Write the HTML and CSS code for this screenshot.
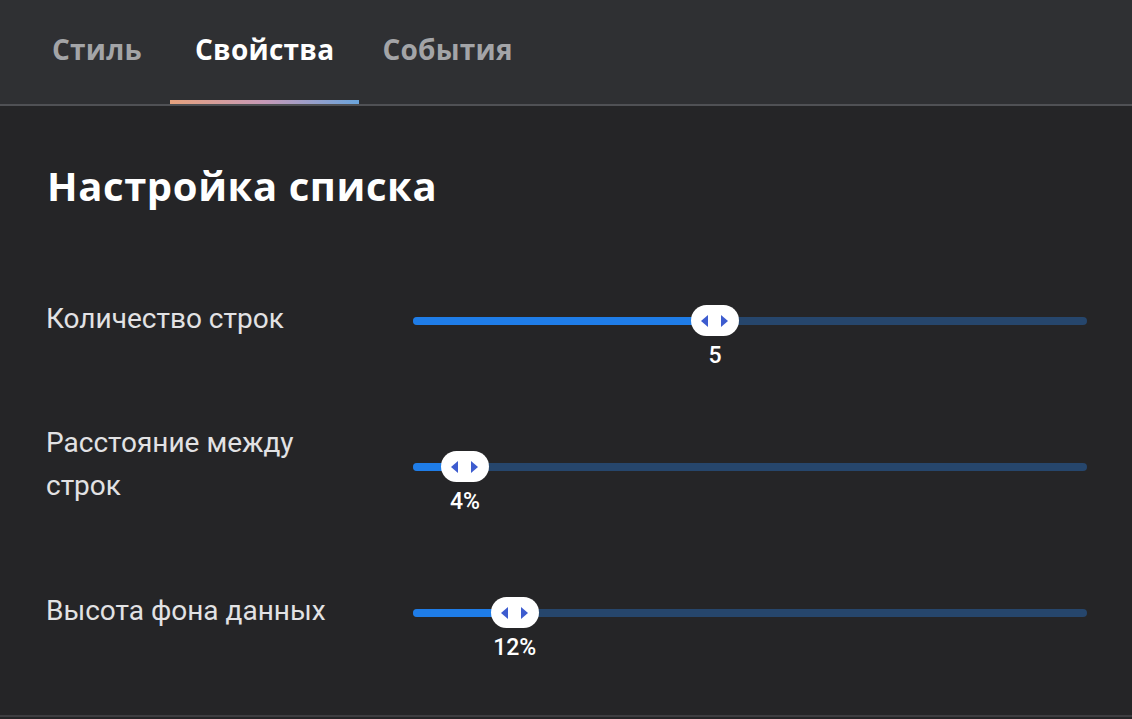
FILE: index.html
```html
<!DOCTYPE html>
<html lang="ru">
<head>
<meta charset="utf-8">
<title>Свойства</title>
<link rel="stylesheet" href="styles.css">
</head>
<body>
<div class="panel">
  <nav class="tabs">
    <div class="tab">Стиль</div>
    <div class="tab active">Свойства</div>
    <div class="tab">События</div>
  </nav>
  <section class="content">
    <h1 class="title">Настройка списка</h1>
    <div class="row">
      <div class="label">Количество строк</div>
      <div class="slider">
        <div class="track">
          <div class="fill" style="width:44.8%"></div>
          <div class="thumb" style="left:44.8%">
            <span class="arrow left"></span><span class="arrow right"></span>
          </div>
          <div class="value" style="left:44.8%">5</div>
        </div>
      </div>
    </div>
    <div class="row">
      <div class="label">Расстояние между строк</div>
      <div class="slider">
        <div class="track">
          <div class="fill" style="width:7.7%"></div>
          <div class="thumb" style="left:7.7%">
            <span class="arrow left"></span><span class="arrow right"></span>
          </div>
          <div class="value" style="left:7.7%">4%</div>
        </div>
      </div>
    </div>
    <div class="row">
      <div class="label">Высота фона данных</div>
      <div class="slider">
        <div class="track">
          <div class="fill" style="width:15.1%"></div>
          <div class="thumb" style="left:15.1%">
            <span class="arrow left"></span><span class="arrow right"></span>
          </div>
          <div class="value" style="left:15.1%">12%</div>
        </div>
      </div>
    </div>
  </section>
</div>
</body>
</html>
```

FILE: styles.css
```css
* { box-sizing: border-box; }
html, body { margin: 0; padding: 0; background: #252527; }
body { width: 1132px; height: 719px; overflow: hidden; }

.panel {
  height: 717px;
  background: #252527;
  border-bottom: 2px solid #3d3d40;
  display: flex;
  flex-direction: column;
}

.tabs {
  height: 106px;
  background: #2f3033;
  border-bottom: 2px solid #505155;
  display: flex;
  align-items: stretch;
  gap: 3px;
  padding-left: 27px;
}

.tab {
  position: relative;
  padding: 34px 25px 0;
  font-family: "Open Sans", "DejaVu Sans", sans-serif;
  font-weight: 700;
  font-size: 28px;
  line-height: 30px;
  letter-spacing: 0.25px;
  color: #a3a4a7;
}

.tab.active {
  color: #ffffff;
  margin-right: -5px;
}

.tab.active::after {
  content: "";
  position: absolute;
  left: 0;
  right: 0;
  bottom: 0;
  height: 4px;
  background: linear-gradient(90deg, #e6a27e 0%, #c79ab8 50%, #6aa4dc 100%);
}

.content {
  flex: 1;
  padding: 0 45px 0 46px;
  display: flex;
  flex-direction: column;
}

.title {
  margin: 55px 0 0 1px;
  font-family: "Open Sans", "DejaVu Sans", sans-serif;
  font-weight: 700;
  font-size: 40px;
  line-height: 50px;
  letter-spacing: 0.6px;
  color: #ffffff;
  height: 87px;
}

.row {
  height: 146px;
  display: flex;
  align-items: center;
}

.label {
  width: 300px;
  margin-right: 67px;
  padding-bottom: 6px;
  font-family: Roboto, "Liberation Sans", sans-serif;
  font-size: 28px;
  line-height: 43px;
  color: #e2e2e4;
}

.slider {
  flex: 1;
}

.track {
  position: relative;
  height: 8px;
  border-radius: 4px;
  background: #26466c;
}

.fill {
  height: 8px;
  border-radius: 4px;
  background: #1f7de8;
}

.thumb {
  position: absolute;
  top: 50%;
  width: 48px;
  height: 31px;
  margin-left: -24px;
  margin-top: -16px;
  border-radius: 16px;
  background: #ffffff;
  display: flex;
  align-items: center;
  justify-content: center;
  gap: 13px;
}

.arrow {
  width: 0;
  height: 0;
  border-top: 6px solid transparent;
  border-bottom: 6px solid transparent;
}

.arrow.left { border-right: 7px solid #3d5ccf; }
.arrow.right { border-left: 7px solid #3d5ccf; }

.value {
  position: absolute;
  top: 26px;
  transform: translateX(-50%);
  font-family: Roboto, "Liberation Sans", sans-serif;
  font-weight: 500;
  font-size: 23px;
  line-height: 26px;
  color: #ffffff;
  white-space: nowrap;
}
```
